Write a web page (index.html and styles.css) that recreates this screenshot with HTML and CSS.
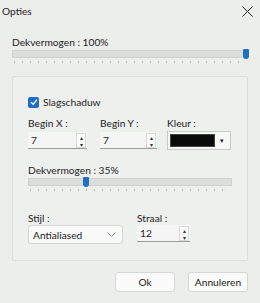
FILE: index.html
```html
<!DOCTYPE html>
<html lang="nl">
<head>
  <meta charset="UTF-8">
  <title>Opties</title>
  <link rel="stylesheet" href="styles.css">
</head>
<body>
  <div class="dialog">
    <header class="titlebar">
      <span class="title">Opties</span>
      <svg class="close" width="11" height="11" viewBox="0 0 11 11"><path d="M0.5 0.5 L10.5 10.5 M10.5 0.5 L0.5 10.5" stroke="#222" stroke-width="1"/></svg>
    </header>

    <main class="content">
      <label class="lbl">Dekvermogen : 100%</label>
      <div class="slider">
        <div class="track"></div>
        <div class="thumb" style="left: 231px"></div>
        <div class="ticks"></div>
      </div>

      <section class="group">
        <label class="check"><span class="box">
          <svg width="8" height="8" viewBox="0 0 8 8"><path d="M1 4.2 L3.2 6.2 L7 1.6" fill="none" stroke="#fff" stroke-width="1.3"/></svg>
        </span>Slagschaduw</label>

        <div class="row">
          <div class="field">
            <label class="lbl">Begin X :</label>
            <div class="spin x">
              <span class="val">7</span>
              <span class="arrows"><span>&#9652;</span><span>&#9662;</span></span>
            </div>
          </div>
          <div class="field">
            <label class="lbl">Begin Y :</label>
            <div class="spin y">
              <span class="val">7</span>
              <span class="arrows"><span>&#9652;</span><span>&#9662;</span></span>
            </div>
          </div>
          <div class="field">
            <label class="lbl">Kleur :</label>
            <div class="color">
              <span class="swatch"></span>
              <span class="drop">&#9662;</span>
            </div>
          </div>
        </div>

        <label class="lbl opacity">Dekvermogen : 35%</label>
        <div class="slider small">
          <div class="track"></div>
          <div class="thumb" style="left: 55px"></div>
          <div class="ticks"></div>
        </div>

        <div class="row bottom">
          <div class="field">
            <label class="lbl">Stijl :</label>
            <div class="combo">
              <span class="val">Antialiased</span>
              <svg width="9" height="5" viewBox="0 0 9 5"><path d="M0.5 0.5 L4.5 4.5 L8.5 0.5" fill="none" stroke="#888" stroke-width="1"/></svg>
            </div>
          </div>
          <div class="field">
            <label class="lbl">Straal :</label>
            <div class="spin radius">
              <span class="val">12</span>
              <span class="arrows"><span>&#9652;</span><span>&#9662;</span></span>
            </div>
          </div>
        </div>
      </section>
    </main>

    <footer class="buttons">
      <button class="btn">Ok</button>
      <button class="btn">Annuleren</button>
    </footer>
  </div>
</body>
</html>
```

FILE: styles.css
```css
* {
  margin: 0;
  padding: 0;
  box-sizing: border-box;
}

body {
  font-family: 'Lato', 'Noto Sans', sans-serif;
  font-size: 10.2px;
  color: #1c1c1c;
  background-color: #eceeec;
  width: 260px;
  height: 303px;
  overflow: hidden;
}

.dialog {
  display: flex;
  flex-direction: column;
  height: 303px;
}

/* Title bar */
.titlebar {
  display: flex;
  justify-content: space-between;
  align-items: center;
  height: 22px;
  padding: 0 7px 0 2px;
}

.close {
  display: block;
}

/* Content */
.content {
  padding: 13px 12px 0 12px;
}

.lbl {
  display: block;
  line-height: 14px;
  white-space: nowrap;
}

.slider {
  position: relative;
  height: 27px;
}

.slider .track {
  position: absolute;
  left: 0;
  right: 0;
  top: 1px;
  height: 8px;
  background: #dcdedc;
  border: 1px solid #d0d2d0;
}

.slider .thumb {
  position: absolute;
  top: 0;
  width: 6px;
  height: 10px;
  background: #1f6fc5;
  border-radius: 1px 1px 3px 3px;
}

.slider .ticks {
  position: absolute;
  left: 2px;
  right: 2px;
  top: 12px;
  height: 2px;
  background: repeating-linear-gradient(to right, #b9bbb9 0 1px, transparent 1px 8px);
}

/* Group box */
.group {
  border: 1px solid #dcdfdc;
  background: #eef0ee;
  border-radius: 2px;
  padding: 19px 15px 0 15px;
  height: 185px;
}

.check {
  display: flex;
  align-items: center;
  gap: 4px;
  line-height: 12px;
}

.check .box {
  display: flex;
  align-items: center;
  justify-content: center;
  width: 11px;
  height: 11px;
  background: #1e6ec4;
  border-radius: 2px;
}

.row {
  display: flex;
  margin-top: 8px;
}

.field .lbl {
  margin-bottom: 2px;
}

.spin {
  display: flex;
  align-items: center;
  justify-content: space-between;
  height: 17px;
  background: #f4f5f4;
  border-bottom: 1px solid #9a9c9a;
  padding-left: 3px;
}

.spin.x {
  width: 59px;
  margin-right: 13px;
}

.spin.y {
  width: 57px;
  margin-right: 10px;
}

.spin .arrows {
  display: flex;
  flex-direction: column;
  width: 10px;
  height: 15px;
  margin-right: 1px;
  font-size: 6px;
  line-height: 7px;
  text-align: center;
  color: #333;
  background: #fafafa;
  border: 1px solid #d8dad8;
}

.spin.radius {
  width: 53px;
}

.color {
  display: flex;
  align-items: center;
  width: 64px;
  height: 19px;
  padding: 2px;
  background: #f7f7f7;
  border: 1px solid #c8cac8;
  margin-top: -1px;
}

.color .swatch {
  width: 45px;
  height: 13px;
  background: #0a0a0a;
  border: 1px solid #444;
}

.color .drop {
  flex: 1;
  text-align: center;
  font-size: 7px;
  color: #222;
}

.opacity {
  margin-top: 13px;
}

.slider.small {
  width: 204px;
}

.bottom {
  margin-top: 7px;
  gap: 14px;
}

.bottom .field .lbl {
  margin-bottom: 0;
}

.combo {
  display: flex;
  align-items: center;
  justify-content: space-between;
  width: 95px;
  height: 19px;
  padding: 0 6px 0 4px;
  background: #f8f9f8;
  border: 1px solid #d3d5d3;
  border-radius: 3px;
}

/* Buttons */
.buttons {
  display: flex;
  justify-content: flex-end;
  gap: 13px;
  padding: 11px 12px 0 0;
}

.btn {
  width: 60px;
  height: 20px;
  font-family: inherit;
  font-size: 10.2px;
  color: #1c1c1c;
  background: #f9faf9;
  border: 1px solid #d6d8d6;
  border-radius: 3px;
}
```
